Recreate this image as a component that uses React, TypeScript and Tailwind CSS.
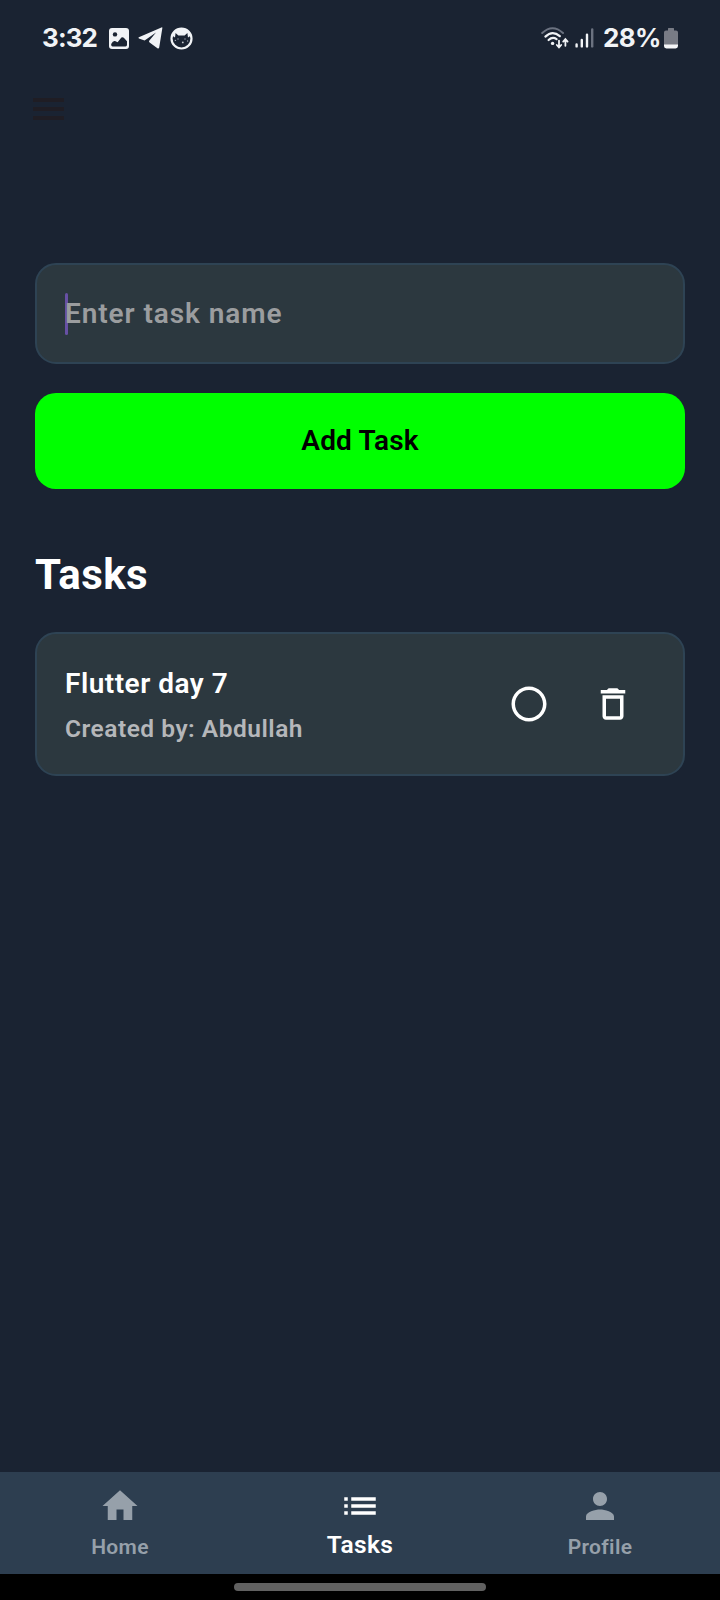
import React from "react";

const ROBOTO = "font-['Roboto','Noto_Sans',sans-serif]";

function PictureIcon() {
  return (
    <svg className="ml-[12px] h-[21px] w-[20px]" viewBox="0 0 20 21">
      <rect x="0" y="0" width="20" height="21" rx="3" fill="#f1f3f6" />
      <circle cx="6" cy="6.4" r="2.2" fill="#1a2332" />
      <path d="M2.2 16 Q4 12.4 6 13 L8.6 14.2 L12.4 9.6 Q13.6 8.6 14.8 9.8 L18 13.2 V16.8 Q18 18.4 16.6 18.4 H3.6 Q2.2 18.4 2.2 17Z" fill="#1a2332" />
    </svg>
  );
}

function PlaneIcon() {
  return (
    <svg className="ml-[9px] h-[22px] w-[25px]" viewBox="0 0 25 22">
      <path d="M24.4 0.8 Q24.4 0 23.4 0.4 L0.8 10.2 Q0 10.8 0.9 11.4 L6.6 13.4 L18 5.6 L11.2 13.8 Q10.6 14.8 11.6 15.6 L19.4 21.2 Q20.8 22 21.2 20.4Z" fill="#f1f3f6" />
    </svg>
  );
}

function FaceIcon() {
  return (
    <svg className="ml-[7px] h-[23px] w-[23px]" viewBox="0 0 23 23">
      <circle cx="11.5" cy="11.5" r="10" fill="#1a2332" stroke="#f1f3f6" strokeWidth="2.2" />
      <path d="M2 8.5 Q3.5 1.5 11.5 1.5 Q19.5 1.5 21 8.5 L18 10.4 L17.4 6 L14.6 8.6 H8.4 L5.6 6 L5 10.4Z" fill="#f1f3f6" />
      <circle cx="8" cy="12" r="0.7" fill="#9aa0ab" />
      <circle cx="15" cy="12" r="0.7" fill="#9aa0ab" />
      <circle cx="12.8" cy="15.4" r="0.9" fill="#c5c9d0" />
      <circle cx="5.4" cy="13.4" r="0.7" fill="#9aa0ab" />
      <circle cx="17.6" cy="14" r="0.7" fill="#9aa0ab" />
    </svg>
  );
}

function WifiIcon() {
  return (
    <svg className="h-[22px] w-[28px]" viewBox="0 0 28 22" fill="none" strokeLinecap="round">
      <path d="M1.2 6 Q11.5 -3.6 22 6" stroke="#6b7280" strokeWidth="2" />
      <path d="M4.4 9.6 Q11.5 2.8 18.8 9.2" stroke="#f1f3f6" strokeWidth="2.2" />
      <path d="M7.6 13 Q11.5 9.4 15.6 12.2" stroke="#f1f3f6" strokeWidth="2.2" />
      <circle cx="11.6" cy="16.4" r="1.7" fill="#f1f3f6" />
      <path d="M18 13.6 V20 M15.8 18 L18 20.4 L20.2 18" stroke="#f1f3f6" strokeWidth="1.8" />
      <path d="M24.4 18.8 V12.6 M22.2 14.6 L24.4 12.2 L26.6 14.6" stroke="#f1f3f6" strokeWidth="1.8" />
    </svg>
  );
}

function SignalIcon() {
  return (
    <svg className="ml-[6px] h-[20px] w-[19px]" viewBox="0 0 19 20" strokeLinecap="round" strokeWidth="2.4">
      <path d="M1.6 16.4 V18.4 M6.8 12 V18.4 M12 6.6 V18.4" stroke="#f1f3f6" />
      <path d="M17.2 1.4 V18.4" stroke="#6b7280" />
    </svg>
  );
}

function BatteryIcon() {
  return (
    <svg className="ml-[4px] h-[21px] w-[14px]" viewBox="0 0 14 21">
      <path d="M4 0.6 Q4 0 4.6 0 H9.4 Q10 0 10 0.6 V2.6 H12 Q14 2.6 14 4.6 V17 H0 V4.6 Q0 2.6 2 2.6 H4Z" fill="#787b85" />
      <path d="M0 16.4 H14 V18 Q14 20.4 11.6 20.4 H2.4 Q0 20.4 0 18Z" fill="#f5f6f8" />
    </svg>
  );
}

function StatusBar() {
  return (
    <header className="flex h-[76px] items-center justify-between pr-[42px] pl-[42px] font-['Inter',sans-serif] text-[26px] leading-[30px] font-bold text-[#f1f3f6]">
      <div className="flex items-center">
        <span className="w-[55px] tracking-[-0.9px] whitespace-nowrap">3:32</span>
        <PictureIcon />
        <PlaneIcon />
        <FaceIcon />
      </div>
      <div className="flex items-center">
        <WifiIcon />
        <SignalIcon />
        <span className="ml-[9px] w-[57px] tracking-[-0.6px] whitespace-nowrap">28%</span>
        <BatteryIcon />
      </div>
    </header>
  );
}

function MenuButton() {
  return (
    <button className="ml-[33px] flex h-[66px] w-[31px] flex-col justify-center gap-[5px]" aria-label="Menu">
      <span className="h-[4px] w-full bg-[#1f1d24]" />
      <span className="h-[4px] w-full bg-[#1f1d24]" />
      <span className="h-[4px] w-full bg-[#1f1d24]" />
    </button>
  );
}

function TaskCard({ title, author }: { title: string; author: string }) {
  return (
    <li className="flex h-[144px] items-center rounded-[21px] border-2 border-[#2e4354] bg-[#2c383f] pr-[49px] pl-[28px]">
      <div className="flex flex-1 flex-col pt-[3px]">
        <span className="text-[28px] leading-[46px] font-semibold tracking-[0.5px] text-white">{title}</span>
        <span className="text-[24.5px] leading-[44px] font-semibold tracking-[0.5px] text-[#b5b7ba]">Created by: {author}</span>
      </div>
      <svg className="h-[42px] w-[42px]" viewBox="0 0 24 24" fill="white">
        <path d="M12 2C6.48 2 2 6.48 2 12s4.48 10 10 10 10-4.48 10-10S17.52 2 12 2zm0 18c-4.42 0-8-3.58-8-8s3.58-8 8-8 8 3.58 8 8-3.58 8-8 8z" />
      </svg>
      <svg className="ml-[42px] h-[42px] w-[42px]" viewBox="0 0 24 24" fill="white">
        <path d="M6 19c0 1.1.9 2 2 2h8c1.1 0 2-.9 2-2V7H6v12zM8 9h8v10H8V9zm7.5-5l-1-1h-5l-1 1H5v2h14V4z" />
      </svg>
    </li>
  );
}

const tabs = [
  { label: "Home", path: "M10 20v-6h4v6h5v-8h3L12 3 2 12h3v8z", active: false },
  { label: "Tasks", path: "M3 13h2v-2H3v2zm0 4h2v-2H3v2zm0-8h2V7H3v2zm4 4h14v-2H7v2zm0 4h14v-2H7v2zM7 7v2h14V7H7z", active: true },
  { label: "Profile", path: "M12 12c2.21 0 4-1.79 4-4s-1.79-4-4-4-4 1.79-4 4 1.79 4 4 4zm0 2c-2.67 0-8 1.34-8 4v2h16v-2c0-2.66-5.33-4-8-4z", active: false },
];

function BottomNav() {
  return (
    <nav className="grid h-[102px] grid-cols-3 bg-[#2d3e50]">
      {tabs.map((tab) => (
        <div key={tab.label} className={tab.active ? "flex flex-col items-center pt-[13px] text-white" : "flex flex-col items-center pt-[13px] text-[#96a0aa]"}>
          <svg className="h-[42px] w-[42px]" viewBox="0 0 24 24" fill="currentColor">
            <path d={tab.path} />
          </svg>
          <span className={tab.active ? "pt-px text-[24.5px] leading-[34px] font-semibold tracking-[0.4px]" : "pt-[3px] text-[21px] leading-[34px] font-semibold tracking-[0.35px]"}>
            {tab.label}
          </span>
        </div>
      ))}
    </nav>
  );
}

export default function App() {
  return (
    <div className={`flex h-[1600px] w-[720px] flex-col bg-[#1a2332] ${ROBOTO}`}>
      <StatusBar />
      <MenuButton />
      <main className="flex flex-1 flex-col px-[35px] pt-[121px]">
        <div className="flex h-[101px] items-center rounded-[21px] border-2 border-[#2e4354] bg-[#2c383f] pl-[28px]">
          <span className="h-[42px] w-[3px] rounded-full bg-[#6750a4]" />
          <span className="-ml-[3px] text-[28px] leading-[40px] font-semibold tracking-[0.92px] text-[#9b9d9f]">Enter task name</span>
        </div>
        <button className="mt-[29px] h-[96px] rounded-[21px] bg-[#00ff00] pb-px text-[28px] leading-[40px] font-semibold tracking-[0.18px] text-black">Add Task</button>
        <h1 className="mt-[61px] text-[42px] leading-[50px] font-bold tracking-[0.4px] text-white">Tasks</h1>
        <ul className="mt-[32px]">
          <TaskCard title="Flutter day 7" author="Abdullah" />
        </ul>
      </main>
      <BottomNav />
      <footer className="flex h-[26px] justify-center bg-black pt-[9px]">
        <div className="h-[8px] w-[252px] rounded-full bg-[#616161]" />
      </footer>
    </div>
  );
}
